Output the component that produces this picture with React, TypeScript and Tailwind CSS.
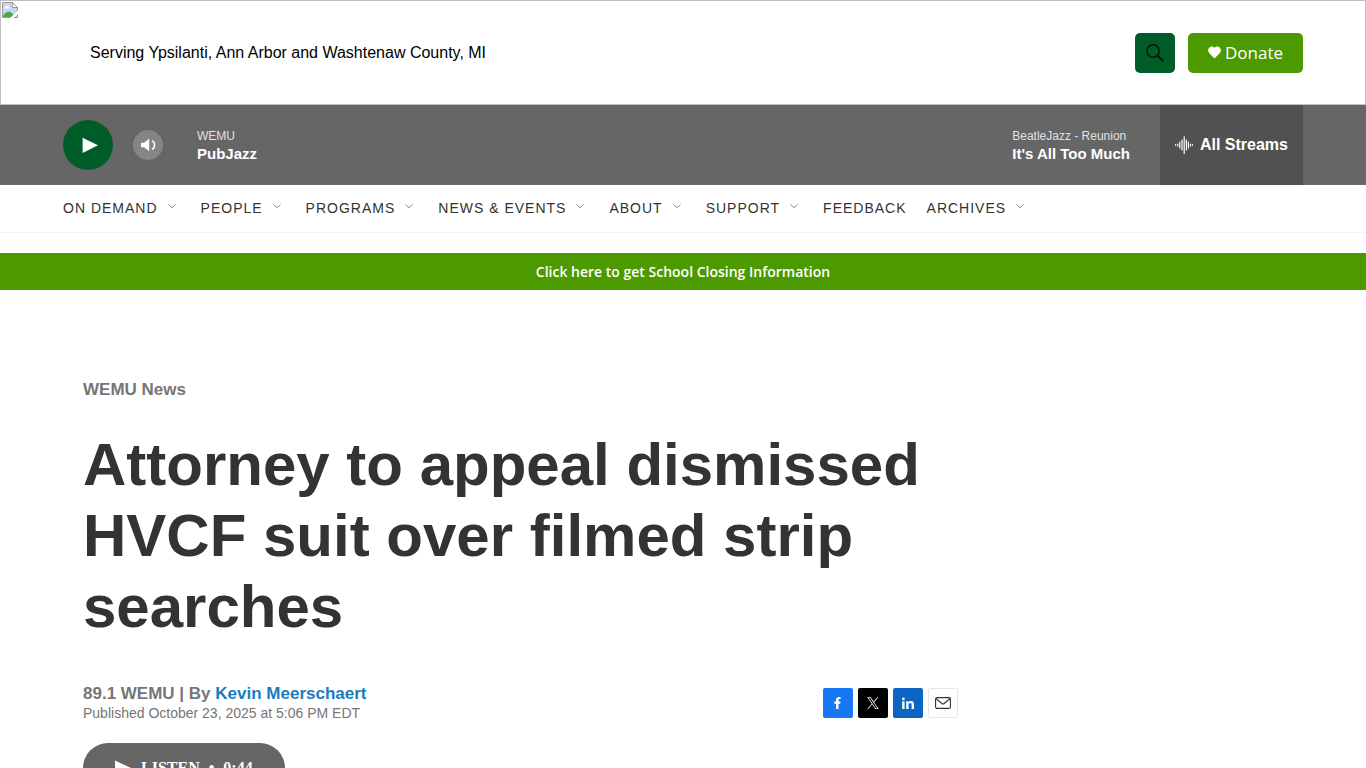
import React from 'react';

const NAV: { label: string; menu: boolean }[] = [
  { label: 'ON DEMAND', menu: true },
  { label: 'PEOPLE', menu: true },
  { label: 'PROGRAMS', menu: true },
  { label: 'NEWS & EVENTS', menu: true },
  { label: 'ABOUT', menu: true },
  { label: 'SUPPORT', menu: true },
  { label: 'FEEDBACK', menu: false },
  { label: 'ARCHIVES', menu: true },
];

function MissingImage() {
  return (
    <svg viewBox="0 0 16 16" className="absolute left-px top-px size-4" aria-hidden="true">
      <path d="M.5.5h10l5 5v10H.5z" fill="#c3d6f7" stroke="#9a9a9a" />
      <path d="M10.500.5v5h5z" fill="#fff" stroke="#9a9a9a" />
      <path d="M2.500 6.500a1.500 1.500 0 0 1 1.400-2 1.800 1.800 0 0 1 3.200.5 1 1 0 0 1 .4 1.500z" fill="#fff" />
      <path d="M1 15v-1.500C3 10.500 6 9 8.500 10l3 2.500V15z" fill="#4fa83d" />
      <path d="M16 8.500 8 16h3.500L16 12z" fill="#fff" />
    </svg>
  );
}

function SearchIcon() {
  return (
    <svg viewBox="0 0 20 20" className="size-5" fill="none" stroke="#001a0b" aria-hidden="true">
      <circle cx="8" cy="8" r="6.200" strokeWidth="1.600" />
      <path d="m12.500 12.500 5.800 5.800" strokeWidth="2.200" />
    </svg>
  );
}

function HeartIcon() {
  return (
    <svg viewBox="0 0 12 12" className="size-[13px]" fill="#fff" aria-hidden="true">
      <path d="M6 11.500 1 6.400C-.4 4.900-.1 2.400 1.500 1.200 2.900.1 4.900.4 6 1.900 7.100.4 9.100.1 10.500 1.200c1.600 1.200 1.900 3.700.5 5.200z" />
    </svg>
  );
}

function WaveIcon() {
  return (
    <svg viewBox="0 0 18 18" className="size-[18px]" stroke="#fff" strokeWidth="1.200" strokeLinecap="round" aria-hidden="true">
      <path d="M.6 8.700v.6M2.700 8v2M4.800 6v6M7 4v10M9.200.8v16.800M11.400 4v10M13.400 6v6M15.400 8v2M17.400 8.700v.6" />
    </svg>
  );
}

function Chevron() {
  return (
    <svg viewBox="0 0 8 4" className="h-1 w-2" fill="none" stroke="#555" strokeWidth=".8" aria-hidden="true">
      <path d="M.5.500C2 2 3 3.300 4 3.300S6 2 7.500.5" />
    </svg>
  );
}

function Header() {
  return (
    <header className="relative flex h-[105px] border border-[#c0c0c0]">
      <MissingImage />
      <div className="mx-auto flex w-full max-w-[1240px] items-center">
        <p className="ml-[27px] flex-1 text-[16px] leading-6 text-black">
          Serving Ypsilanti, Ann Arbor and Washtenaw County, MI
        </p>
        <button type="button" aria-label="Search" className="mr-[13px] flex size-10 items-center justify-center rounded-[5px] bg-[#005c29]">
          <SearchIcon />
        </button>
        <a href="#donate" className="flex h-10 w-[115px] items-center justify-center gap-1 rounded-[5px] bg-[#4c9900] font-['Open_Sans','Noto_Sans',sans-serif] text-[17px] leading-6 text-white">
          <HeartIcon />
          Donate
        </a>
      </div>
    </header>
  );
}

function PlayerBar() {
  return (
    <section aria-label="Radio player" className="h-20 bg-[#666] text-white">
      <div className="mx-auto flex h-full max-w-[1240px] items-center">
        <button type="button" aria-label="Play" className="flex size-[50px] items-center justify-center rounded-full bg-[#005c29]">
          <svg viewBox="0 0 16 16" className="ml-1 size-4" fill="#fff" aria-hidden="true">
            <path d="M.6.8 16 8.300.6 16z" />
          </svg>
        </button>
        <button type="button" aria-label="Volume" className="ml-5 flex size-[30px] items-center justify-center rounded-full bg-[#858585]">
          <svg viewBox="0 0 16 14" className="h-[14px] w-4" fill="#fff" aria-hidden="true">
            <path d="M1 4.700h3L9.200.8v12.400L4 9.300H1z" />
            <path d="M12 2.600c3.400 1.800 3.400 7 0 8.800" fill="none" stroke="#fff" strokeWidth="1.500" />
          </svg>
        </button>
        <div className="ml-[34px] flex-1">
          <p className="text-[12px] leading-[18px] text-[#e0e0e0]">WEMU</p>
          <p className="text-[15px] font-bold leading-[18px]">PubJazz</p>
        </div>
        <div className="mr-[30px]">
          <p className="text-[12px] leading-[18px] text-[#e0e0e0]">BeatleJazz - Reunion</p>
          <p className="text-[15px] font-bold leading-[18px]">It's All Too Much</p>
        </div>
        <button type="button" className="flex h-full items-center gap-[7px] bg-[#515151] px-[15px] text-[16px] font-bold">
          <WaveIcon />
          All Streams
        </button>
      </div>
    </section>
  );
}

function NavBar() {
  return (
    <nav aria-label="Main" className="border-b border-[#f2f2f2] pb-px">
      <ul className="mx-auto flex h-[46px] max-w-[1240px] items-center gap-5 text-[14px] leading-5 tracking-[1px] text-[#333]">
        {NAV.map((item) => (
          <li key={item.label} className="flex items-center">
            <a href="#section">{item.label}</a>
            {item.menu && (
              <button type="button" aria-label={`Open ${item.label} menu`} className="ml-[10px] mr-[5px] flex h-5 items-center pb-1">
                <Chevron />
              </button>
            )}
          </li>
        ))}
      </ul>
    </nav>
  );
}

function ShareLinks() {
  return (
    <div className="flex gap-[5px]">
      <a href="#facebook" aria-label="Share on Facebook" className="flex size-[30px] items-center justify-center rounded-xs bg-[#1877f2]">
        <svg viewBox="0 0 8 12" className="h-3 w-2" fill="#fff" aria-hidden="true">
          <path d="M2 12V6.800H.3V4.500H2V3.100C2 1.100 3.200 0 5 0c.8 0 1.600.1 1.600.1v2h-.9c-.9 0-1.200.5-1.200 1.100v1.300h2L6.200 6.800H4.500V12z" />
        </svg>
      </a>
      <a href="#x" aria-label="Share on X" className="flex size-[30px] items-center justify-center rounded-xs bg-black">
        <svg viewBox="0 0 24 24" className="size-3" fill="#fff" aria-hidden="true">
          <path d="M14.200 10.300 22.700.5h-2l-7.400 8.500L7.400.5H.6l8.900 13L.6 23.800h2l7.800-9.100 6.300 9.100h6.800zM11.400 13.500l-.9-1.300L3.300 2h3.200l5.800 8.300.9 1.300 7.600 10.800h-3.200z" />
        </svg>
      </a>
      <a href="#linkedin" aria-label="Share on LinkedIn" className="flex size-[30px] items-center justify-center rounded-xs bg-[#0a66c2]">
        <svg viewBox="0 0 12 12" className="size-3" fill="#fff" aria-hidden="true">
          <circle cx="1.400" cy="1.800" r="1.400" />
          <path d="M.2 4.200h2.400V12H.2zM4.200 4.200h2.300v1.100C6.900 4.500 7.800 4 8.900 4 11.300 4 12 5.500 12 7.700V12H9.600V8.200c0-1.100-.1-2.100-1.400-2.100S6.600 7.100 6.600 8.100V12H4.200z" />
        </svg>
      </a>
      <a href="#email" aria-label="Share by email" className="flex size-[30px] items-center justify-center rounded-xs border border-[#e6e6e6] bg-white">
        <svg viewBox="0 0 16 12" className="h-3 w-4" fill="none" stroke="#333" strokeWidth="1.100" aria-hidden="true">
          <rect x=".6" y=".6" width="14.800" height="10.800" rx="1.400" />
          <path d="m1 1.500 5.800 5c.7.600 1.700.6 2.400 0l5.800-5" />
        </svg>
      </a>
    </div>
  );
}

function Article() {
  return (
    <main className="mx-auto max-w-[1240px] px-5 pt-[90px]">
      <article className="max-w-[875px]">
        <a href="#news" className="block text-[17px] font-bold leading-5 text-[#767676]">WEMU News</a>
        <h1 className="mt-[29px] text-[60px] font-bold leading-[71px] text-[#333]">
          Attorney to appeal dismissed HVCF suit over filmed strip searches
        </h1>
        <div className="mt-[42px] flex items-start justify-between">
          <div>
            <p className="text-[17px] font-bold leading-5 text-[#767676]">
              89.1 WEMU | By <a href="#author" className="text-[#1a7bbf]">Kevin Meerschaert</a>
            </p>
            <p className="text-[14px] leading-[18px] text-[#767676]">Published October 23, 2025 at 5:06 PM EDT</p>
          </div>
          <div className="pt-1">
            <ShareLinks />
          </div>
        </div>
        <button type="button" className="mt-[21px] flex h-[50px] w-[202px] items-center rounded-full bg-[#666] pl-8 font-['Liberation_Serif',serif] text-[16px] font-bold leading-6 text-white">
          <svg viewBox="0 0 16 16" className="mr-[10px] size-4" fill="#fff" aria-hidden="true">
            <path d="M0 .5 16 8 0 15.500z" />
          </svg>
          LISTEN<span className="mx-[9px]">•</span>0:44
        </button>
      </article>
    </main>
  );
}

export default function App() {
  return (
    <div className="h-screen overflow-hidden bg-white font-['Liberation_Sans',Arial,sans-serif]">
      <Header />
      <PlayerBar />
      <NavBar />
      <a href="#closings" className="mt-5 block bg-[#4c9900] py-2 text-center font-['Open_Sans','Noto_Sans',sans-serif] text-[14px] font-semibold leading-[21px] text-white">
        Click here to get School Closing Information
      </a>
      <Article />
    </div>
  );
}
